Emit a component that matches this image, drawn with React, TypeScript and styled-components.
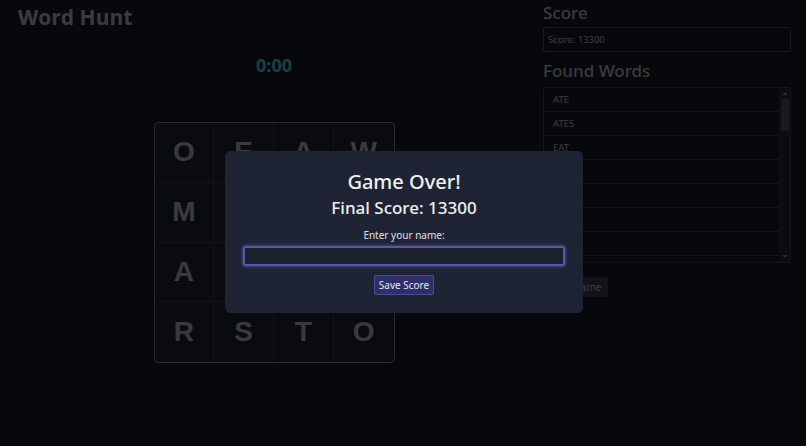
import React from "react";
import styled, { createGlobalStyle } from "styled-components";

const Global = createGlobalStyle`
  html, body { margin: 0; padding: 0; background: #181b25; }
  body { font-family: "Noto Sans", "Open Sans", sans-serif; color: #c4c4cc; }
  * { box-sizing: border-box; }
`;

const Page = styled.div`
  width: 806px;
  height: 446px;
  display: flex;
  gap: 5px;
  padding: 0 15px 0 10px;
  overflow: hidden;
`;

const Main = styled.div`
  width: 528px;
  display: flex;
  flex-direction: column;
  align-items: center;
`;

const Title = styled.h1`
  align-self: flex-start;
  margin: 3px 0 0 8px;
  font-family: "Open Sans", sans-serif;
  font-weight: 700;
  font-size: 21px;
  line-height: 28px;
  color: #c6c6cc;
`;

const Timer = styled.div`
  margin-top: 22px;
  font-family: "Open Sans", sans-serif;
  font-weight: 700;
  font-size: 18px;
  line-height: 24px;
  color: #5ad8e2;
`;

const Board = styled.div`
  margin-top: 45px;
  width: 241px;
  height: 241px;
  display: grid;
  grid-template-columns: repeat(4, 1fr);
  grid-template-rows: repeat(4, 1fr);
  border: 1px solid #8a909c;
  border-radius: 4px;
  background: #242734;
  overflow: hidden;
`;

const Cell = styled.div`
  display: flex;
  align-items: center;
  justify-content: center;
  border-right: 1px solid #3c4250;
  border-bottom: 1px solid #3c4250;
  &:nth-child(4n) { border-right: none; }
  &:nth-child(n + 13) { border-bottom: none; }
  font-family: "Liberation Sans", Arial, sans-serif;
  font-weight: 700;
  font-size: 28px;
  color: #c2c2c8;
`;

const Side = styled.div`
  width: 248px;
  display: flex;
  flex-direction: column;
`;

const Heading = styled.h2`
  margin: 2px 0 4px;
  font-family: "Noto Sans", sans-serif;
  font-weight: 500;
  font-size: 17px;
  line-height: 22px;
  color: #c6c6cc;
`;

const ScoreBox = styled.div`
  height: 25px;
  border: 1px solid #545a68;
  border-radius: 3px;
  padding: 0 4px;
  display: flex;
  align-items: center;
  font-size: 9.5px;
  color: #c4c4cc;
  margin-bottom: 6px;
  margin-top: -1px;
`;

const ListFrame = styled.div`
  margin-top: 1px;
  height: 176px;
  display: flex;
  border: 1px solid #454b58;
  border-radius: 3px;
  overflow: hidden;
`;

const WordList = styled.ul`
  flex: 1;
  margin: 0;
  padding: 0;
  list-style: none;
  overflow: hidden;
`;

const Word = styled.li`
  height: 24px;
  padding: 0 9px;
  display: flex;
  align-items: center;
  border-bottom: 1px solid #434957;
  font-size: 9.5px;
  color: #c4c4cc;
`;

const ScrollTrack = styled.div`
  width: 11px;
  display: flex;
  flex-direction: column;
  align-items: center;
  background: #262932;
  border-left: 1px solid #30333c;
`;

const ScrollArrow = styled.div<{ $down?: boolean }>`
  width: 0;
  height: 0;
  margin: 4px 0;
  border-left: 3px solid transparent;
  border-right: 3px solid transparent;
  ${(p) => (p.$down ? "border-top: 3px solid #8a8d96;" : "border-bottom: 3px solid #8a8d96;")}
`;

const ScrollThumb = styled.div`
  width: 8px;
  height: 32px;
  border-radius: 2px;
  background: #595c66;
`;

const ScrollSpace = styled.div`
  flex: 1;
`;

const NewGame = styled.button`
  align-self: flex-start;
  margin: 14px 0 0 0;
  height: 20px;
  padding: 0 7px;
  border: none;
  border-radius: 3px;
  background: #3c4250;
  color: #c4c4cc;
  font-family: "Noto Sans", sans-serif;
  font-size: 10px;
`;

const Overlay = styled.div`
  position: fixed;
  inset: 0;
  background: rgba(0, 0, 0, 0.7);
`;

const Modal = styled.div`
  position: fixed;
  left: 225px;
  top: 151px;
  width: 358px;
  height: 162px;
  background: #1e2433;
  border-radius: 6px;
  display: flex;
  flex-direction: column;
  align-items: center;
  padding: 18px 18px 0;
  color: #f0f0f2;
`;

const ModalTitle = styled.div`
  font-size: 20px;
  font-weight: 500;
  line-height: 26px;
`;

const FinalScore = styled.div`
  font-size: 17px;
  font-weight: 500;
  line-height: 24px;
  margin-top: 1px;
`;

const Label = styled.label`
  margin-top: 8px;
  font-size: 10px;
  line-height: 14px;
  color: #e0e0e6;
`;

const NameInput = styled.input`
  margin-top: 4px;
  width: 322px;
  height: 20px;
  border: 2px solid #5b56a8;
  border-radius: 3px;
  background: #1c2130;
  box-shadow: 0 0 3px 1px rgba(110, 100, 220, 0.5);
  outline: none;
  color: #e8e8ee;
  caret-color: #e8e8ee;
  padding: 0 4px;
  font-size: 11px;
`;

const SaveButton = styled.button`
  margin-top: 9px;
  height: 20px;
  padding: 0 4px;
  border: 1px solid #4c4a9a;
  border-radius: 2px;
  background: #2d2f6b;
  color: #e6e6f0;
  font-family: "Noto Sans", sans-serif;
  font-size: 10px;
`;

const letters = ["O", "E", "A", "W", "M", "E", "A", "T", "A", "T", "E", "S", "R", "S", "T", "O"];
const words = ["ATE", "ATES", "EAT", "EATS", "SEAT", "TEAS", "OATS", "STOAT", "TOAST", "MEAT", "MATE"];

export default function App() {
  return (
    <>
      <Global />
      <Page>
        <Main>
          <Title>Word Hunt</Title>
          <Timer>0:00</Timer>
          <Board>
            {letters.map((l, i) => (
              <Cell key={i}>{l}</Cell>
            ))}
          </Board>
        </Main>
        <Side>
          <Heading>Score</Heading>
          <ScoreBox>Score: 13300</ScoreBox>
          <Heading>Found Words</Heading>
          <ListFrame>
            <WordList>
              {words.map((w) => (
                <Word key={w}>{w}</Word>
              ))}
            </WordList>
            <ScrollTrack>
              <ScrollArrow />
              <ScrollThumb />
              <ScrollSpace />
              <ScrollArrow $down />
            </ScrollTrack>
          </ListFrame>
          <NewGame>New Game</NewGame>
        </Side>
      </Page>
      <Overlay />
      <Modal>
        <ModalTitle>Game Over!</ModalTitle>
        <FinalScore>Final Score: 13300</FinalScore>
        <Label htmlFor="name">Enter your name:</Label>
        <NameInput id="name" autoFocus />
        <SaveButton>Save Score</SaveButton>
      </Modal>
    </>
  );
}
